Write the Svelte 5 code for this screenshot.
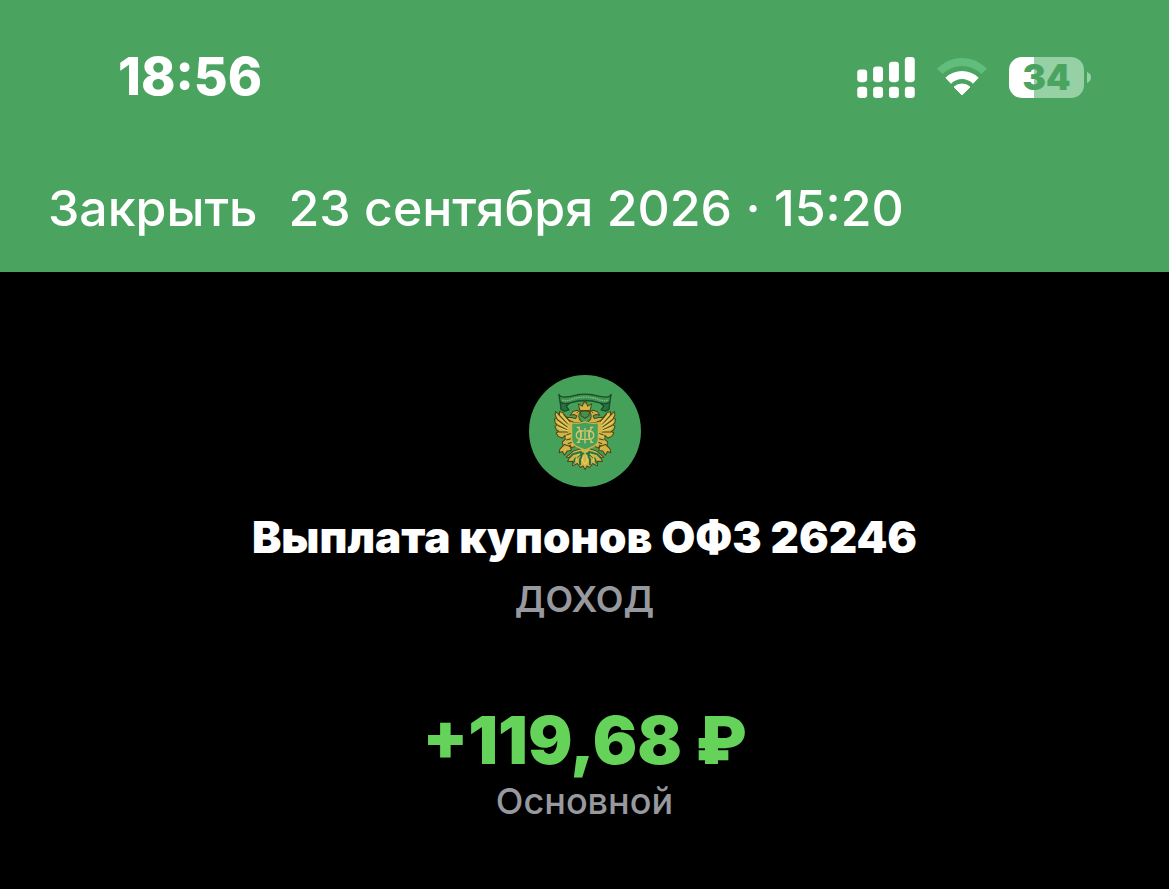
<script lang="ts">
  const clock = '18:56'
  const battery = 34

  const operation = {
    date: '23 сентября 2026 · 15:20',
    title: 'Выплата купонов ОФЗ 26246',
    category: 'ДОХОД',
    amount: '+119,68 ₽',
    account: 'Основной'
  }

  const bars = [
    { x: 0, y: 38, height: 38 },
    { x: 48, y: 29, height: 47 },
    { x: 96, y: 14, height: 62 },
    { x: 144, y: 0, height: 76 }
  ]
</script>

<svelte:head>
  <title>{operation.title}</title>
</svelte:head>

<header class="header">
  <div class="status-bar">
    <time class="clock">{clock}</time>

    <div class="indicators">
      <svg class="signal" viewBox="0 0 174 124" aria-hidden="true">
        {#each bars as bar (bar.x)}
          <rect x={bar.x} y={bar.y} width="30" height={bar.height} rx="10" />
          <rect x={bar.x} y="90" width="30" height="34" rx="10" />
        {/each}
      </svg>

      <svg class="wifi" viewBox="0 0 150 114" aria-hidden="true">
        <path class="weak" d="M0 32Q5 27 10 23Q38 0 75 0Q112 0 140 23Q145 27 150 32L133 48Q108 24 75 24Q42 24 17 48Z" />
        <path d="M25 59Q47 39 75 39Q103 39 125 59L108 77Q93 63 75 63Q57 63 42 77Z" />
        <path d="M51 87Q61 78 75 78Q89 78 99 87L75 111Z" stroke="#fff" stroke-width="3" stroke-linejoin="round" />
      </svg>

      <div class="battery">
        <span class="level" style="--level: {battery}%">{battery}</span>
        <svg class="tip" viewBox="0 0 14 38" aria-hidden="true">
          <path d="M0 0Q14 5 14 19Q14 33 0 38Z" />
        </svg>
      </div>
    </div>
  </div>

  <nav class="nav-bar">
    <button type="button" class="close">Закрыть</button>
    <time class="date" datetime="2026-09-23T15:20">{operation.date}</time>
  </nav>
</header>

<main class="details">
  <svg class="emblem" viewBox="28 28 334 334" role="img" aria-label="Министерство финансов">
    <circle cx="195" cy="195" r="167" fill="#45a15a" />

    <!-- ribbon -->
    <g stroke="#174d2a" stroke-width="4" stroke-linejoin="round">
      <path d="M121 107L123 130L134 136L147 132L139 121L150 111Z" fill="#2a713e" />
      <path d="M269 107L267 130L256 136L243 132L251 121L240 111Z" fill="#2a713e" />
      <path d="M117 86Q121 94 133 94Q154 93 172 87Q195 83 218 87Q240 93 257 94Q269 94 273 86L269 109Q258 117 239 111Q216 104 195 104Q174 104 151 111Q132 117 121 109Z" fill="#3d9251" />
    </g>
    <path d="M127 103Q143 107 160 99Q195 89 230 99Q247 107 263 103" fill="none" stroke="#83b779" stroke-width="4" stroke-dasharray="5 2" />

    <g fill="#d2b546" stroke="#4c4618" stroke-width="3" stroke-linejoin="round">
      <!-- tail -->
      <path d="M184 247L160 255L139 273L149 274L143 286L158 285L158 299L172 292L181 304L189 299L195 310L201 299L209 304L218 292L232 299L232 285L247 286L241 274L251 273L230 255L206 247Z" />

      <!-- wings and legs, drawn once and mirrored -->
      {#each ['', 'translate(390 0) scale(-1 1)'] as transform}
        <g {transform}>
          <path d="M160 170L151 161L139 154L129 140L119 137L119 146L107 137L106 149L111 157L104 159L106 171L112 176L105 181L110 192L117 196L109 201L115 211L127 216L136 208L136 220L127 228L130 239L144 243L151 237L155 246L166 240L160 214L158 184Z" />
          <path d="M134 235L120 249L118 260L128 256L134 267L142 255L154 253L151 241Z" />
          <path d="M193 170Q183 168 178 159Q174 145 182 139L171 133L159 137L151 148L163 146L171 150L167 158L153 155L139 154L147 163L164 170Z" />
          <path d="M131 145L151 169M115 144L145 177M111 160L143 184M113 178L142 192M116 198L145 198M140 207L153 202M139 222L154 218M144 233L158 228" fill="none" />
          <path d="M123 145L148 170M112 152L146 180M111 168L144 188M115 185L145 195M137 214L154 208" fill="none" stroke="#ecd263" />
          <path d="M185 257L159 264L149 274M188 260L166 277L160 292M191 260L180 279L180 297" fill="none" stroke="#277342" stroke-width="6" />
          <path d="M180 263L169 273L168 284M190 265L188 284L194 294" fill="none" stroke="#efd05a" />
          <circle cx="172" cy="140" r="2" fill="#4c4618" stroke="none" />
        </g>
      {/each}

      <!-- crown -->
      <path d="M180 134L175 114L187 121L191 110L195 105L199 110L203 121L215 114L210 134Z" />
      <path d="M181 138Q195 132 209 138L206 150L195 157L184 150Z" fill="#47924b" />
      <path d="M195 103V115M190 109H200" stroke-width="2" />

      <!-- shield -->
      <path d="M155 171Q176 174 195 168Q214 174 235 171V220Q233 239 211 245L195 252L179 245Q157 239 155 220Z" fill="#45a15a" stroke="#cdb54a" stroke-width="4" />
    </g>

    <!-- monogram -->
    <g fill="none" stroke="#d4c46b" stroke-width="4">
      <path d="M170 184H180M175 184L185 205M175 229L185 207M170 229H180M210 184H220M215 184L205 205M215 229L205 207M210 229H220M195 186V232" />
      <path d="M182 192V222M208 192V222M191 195H184Q169 195 169 208Q169 220 184 220H206Q221 220 221 208Q221 195 206 195H199" />
    </g>
  </svg>

  <h1 class="title">{operation.title}</h1>
  <p class="category">{operation.category}</p>
  <p class="amount">{operation.amount}</p>
  <p class="account">{operation.account}</p>
</main>

<style>
  :global(body) {
    margin: 0;
    background: #000;
    color: #fff;
    font-family: Inter, 'Liberation Sans', sans-serif;
  }

  .header {
    padding: 46px 48px 34px;
    background: #4aa45f;
  }

  .status-bar {
    display: flex;
    align-items: center;
    justify-content: space-between;
    padding: 0 30px 0 70px;
  }

  .clock {
    font-size: 52px;
    font-weight: 800;
    line-height: 62px;
  }

  .indicators {
    display: flex;
    align-items: center;
    gap: 22px;
  }

  .indicators svg {
    display: block;
    fill: #fff;
  }

  .signal {
    width: 58px;
    height: 41px;
  }

  .wifi {
    width: 50px;
    height: 38px;
  }

  .wifi .weak {
    fill: #61bd7b;
  }

  .battery {
    display: flex;
    align-items: center;
    gap: 3px;
  }

  .level {
    width: 75px;
    border-radius: 13px;
    background: linear-gradient(to right, #fff var(--level), #95d1a5 var(--level));
    color: #4aa45f;
    font-size: 35px;
    font-weight: 900;
    line-height: 41px;
    text-align: center;
  }

  .indicators .tip {
    width: 4px;
    height: 13px;
    fill: #95d1a5;
  }

  .nav-bar {
    display: flex;
    align-items: center;
    gap: 31px;
    margin-top: 70px;
  }

  .close,
  .date {
    font-size: 50px;
    font-weight: 500;
    line-height: 60px;
    white-space: nowrap;
  }

  .close {
    padding: 0;
    border: none;
    background: none;
    color: inherit;
    font-family: inherit;
    cursor: pointer;
  }

  .details {
    display: flex;
    flex-direction: column;
    align-items: center;
    padding: 103px 24px 64px;
    text-align: center;
  }

  .emblem {
    width: 112px;
    height: 112px;
  }

  .title {
    margin: 24px 0 0;
    font-size: 44px;
    font-weight: 900;
    line-height: 52px;
  }

  .category,
  .account {
    margin: 0;
    color: #98989f;
    font-size: 36px;
    font-weight: 600;
    line-height: 44px;
  }

  .category {
    margin-top: 14px;
  }

  .amount {
    margin: 80px 0 0;
    color: #65d35a;
    font-size: 66px;
    font-weight: 900;
    line-height: 78px;
  }

  .account {
    font-weight: 500;
  }
</style>
